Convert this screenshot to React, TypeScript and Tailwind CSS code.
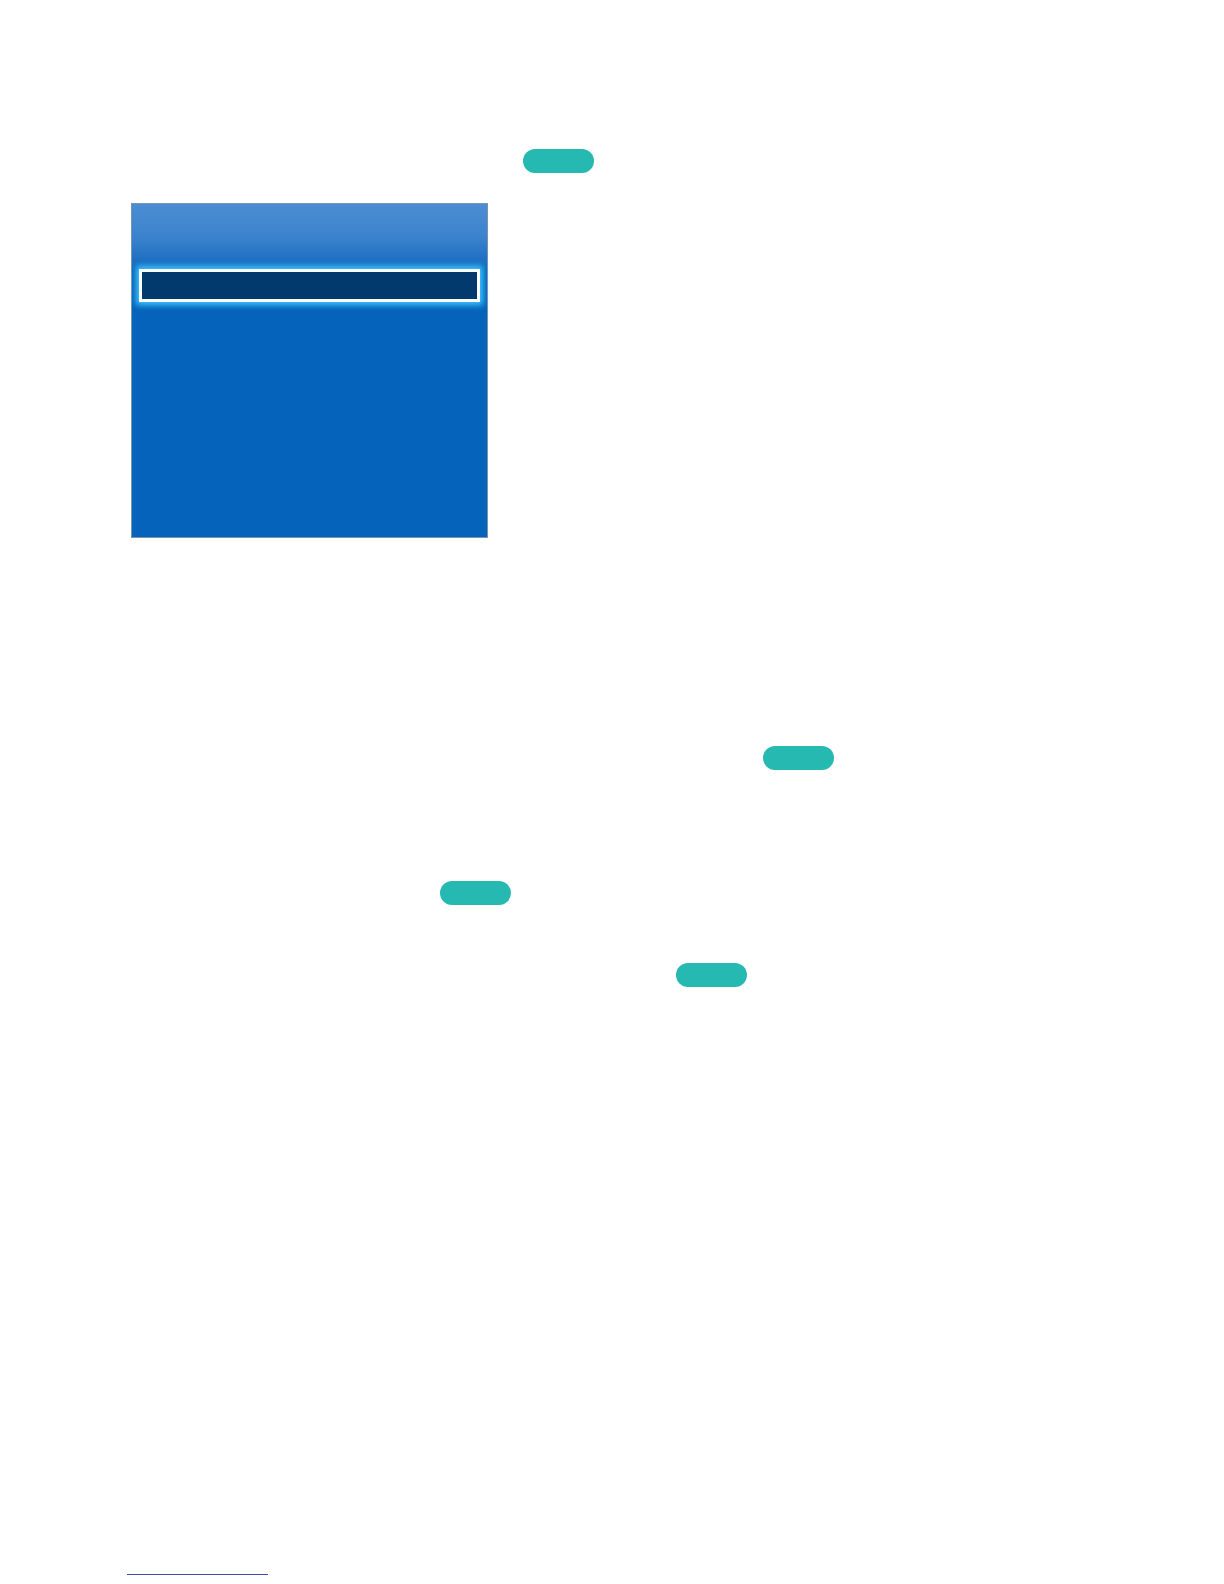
import React from 'react'

function Pill({ left }: { left: string }) {
  return <div className={`h-[24px] w-[71px] rounded-full bg-[#26b9b1] ${left}`} />
}

export default function App() {
  return (
    <div className="w-[1224px] h-[1584px] bg-white flex flex-col" style={{ fontFamily: '"Liberation Sans", Arial, sans-serif' }}>
      {/* first line with button badge */}
      <div className="mt-[149px] flex">
        <Pill left="ml-[523px]" />
      </div>

      {/* OSD menu screenshot */}
      <div className="mt-[30px] ml-[131px] w-[357px] h-[335px] border border-[#7b93ad] bg-[#0563bb] flex flex-col">
        <div className="h-[65px] bg-gradient-to-b from-[#4c8dd2] via-[#3b83cd] to-[#1068be]" />
        <div className="px-[7px]">
          <div className="h-[33px] border-[3px] border-white bg-[#033a6d] shadow-[0_0_6px_3px_#3ec8ff]" />
        </div>
      </div>

      <div className="mt-[208px] flex">
        <Pill left="ml-[763px]" />
      </div>
      <div className="mt-[111px] flex">
        <Pill left="ml-[440px]" />
      </div>
      <div className="mt-[58px] flex">
        <Pill left="ml-[676px]" />
      </div>

      {/* footer link underline */}
      <div className="mt-[587px] ml-[127px] w-[141px] h-px bg-[#3b4fa8]" />
    </div>
  )
}
